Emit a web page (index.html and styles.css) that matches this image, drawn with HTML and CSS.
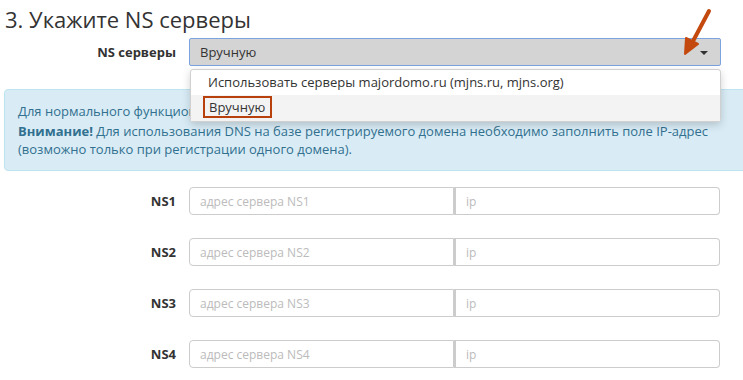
FILE: index.html
```html
<!DOCTYPE html>
<html lang="ru">
<head>
<meta charset="utf-8">
<link rel="stylesheet" href="styles.css">
</head>
<body>
<div class="page">
  <h2 class="title">3. Укажите NS серверы</h2>
  <div class="row select-row">
    <label class="lbl">NS серверы</label>
    <div class="select">
      <span>Вручную</span>
      <span class="caret"></span>
    </div>
    <ul class="menu">
      <li class="item">Использовать серверы majordomo.ru (mjns.ru, mjns.org)</li>
      <li class="item active"><span class="mark">Вручную</span></li>
    </ul>
    <svg class="arrow" width="40" height="50" viewBox="0 0 40 50">
      <line x1="33" y1="3" x2="16" y2="35" stroke="#c4490f" stroke-width="4" stroke-linecap="round"/>
      <polygon points="9,46 10,30 22,36" fill="#c4490f" stroke="#c4490f" stroke-width="2" stroke-linejoin="round"/>
    </svg>
  </div>
  <div class="alert">
    <p>Для нормального функционирования домена необходимо указать NS серверы.</p>
    <p><b>Внимание!</b> Для использования DNS на базе регистрируемого домена необходимо заполнить поле IP-адрес (возможно только при регистрации одного домена).</p>
  </div>
  <div class="ns-list">
    <div class="row">
      <label class="lbl">NS1</label>
      <div class="group"><input class="inp" placeholder="адрес сервера NS1"><input class="inp ip" placeholder="ip"></div>
    </div>
    <div class="row">
      <label class="lbl">NS2</label>
      <div class="group"><input class="inp" placeholder="адрес сервера NS2"><input class="inp ip" placeholder="ip"></div>
    </div>
    <div class="row">
      <label class="lbl">NS3</label>
      <div class="group"><input class="inp" placeholder="адрес сервера NS3"><input class="inp ip" placeholder="ip"></div>
    </div>
    <div class="row">
      <label class="lbl">NS4</label>
      <div class="group"><input class="inp" placeholder="адрес сервера NS4"><input class="inp ip" placeholder="ip"></div>
    </div>
  </div>
</div>
</body>
</html>
```
FILE: styles.css
```css
* { box-sizing: border-box; }
html, body { margin: 0; padding: 0; background: #fff; overflow: hidden; }
body { font-family: "Open Sans", "DejaVu Sans", sans-serif; color: #333; font-size: 13px; }
.page { width: 743px; height: 380px; position: relative; }
.title {
  margin: 0;
  padding: 4px 0 0 5px;
  font-weight: 400;
  font-size: 22px;
  line-height: 30px;
  color: #333;
}
.row { display: flex; align-items: center; }
.select-row { margin-top: 4px; position: relative; }
.lbl {
  width: 176px;
  text-align: right;
  font-weight: 700;
  font-size: 13px;
  margin-right: 13px;
  color: #333;
}
.select {
  width: 532px;
  height: 28px;
  background: #d4d4d4;
  border: 1px solid #7ba3e0;
  border-radius: 2px;
  display: flex;
  align-items: center;
  justify-content: space-between;
  padding: 0 12px 0 10px;
  font-size: 13px;
  color: #333;
}
.caret {
  width: 0; height: 0;
  border-left: 4px solid transparent;
  border-right: 4px solid transparent;
  border-top: 4px solid #333;
  margin-top: 2px;
}
.menu {
  position: absolute;
  left: 190px;
  top: 31px;
  width: 531px;
  margin: 0;
  padding: 0;
  list-style: none;
  background: #fff;
  border: 1px solid #d0d0d0;
  border-radius: 3px;
  box-shadow: 0 3px 8px rgba(0,0,0,0.18);
  z-index: 5;
}
.item { height: 25px; line-height: 25px; padding-left: 17px; font-size: 13px; color: #333; }
.item.active { background: #f3f3f3; height: 26px; padding-left: 12px; }
.mark {
  display: inline-block;
  border: 2px solid #b8400d;
  line-height: 18px;
  padding: 0 5px 0 4px;
  margin-top: 1px;
  vertical-align: top;
}
.arrow { position: absolute; left: 676px; top: -30px; z-index: 6; }
.alert {
  margin: 23px 0 0 4px;
  width: 760px;
  height: 82px;
  background: #d9ecf6;
  border: 1px solid #bde5f0;
  border-radius: 4px;
  padding: 12px 40px 0 13px;
  color: #31708f;
  font-size: 13px;
  line-height: 18px;
}
.alert p { margin: 0 0 2px; }
.alert b { font-weight: 700; }
.ns-list { margin-top: 16px; display: flex; flex-direction: column; gap: 23px; }
.group { display: flex; width: 531px; }
.inp {
  height: 28px;
  width: 265px;
  border: 1px solid #ccc;
  border-radius: 4px 0 0 4px;
  padding: 0 10px;
  font-family: "Open Sans", "DejaVu Sans", sans-serif;
  font-size: 12px;
  color: #333;
  background: #fff;
  outline: none;
}
.inp.ip { border-radius: 0 4px 4px 0; border-left: 2px solid #ccc; width: 266px; }
.inp::placeholder { color: #bbb; }
```
